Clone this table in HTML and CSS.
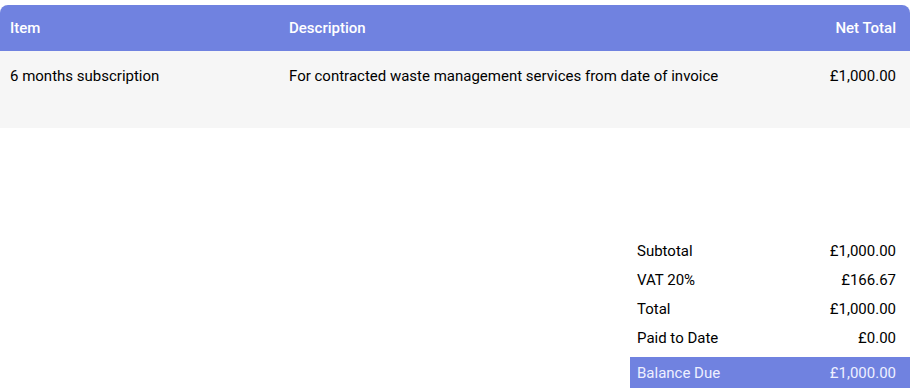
FILE: index.html
```html
<!DOCTYPE html>
<html lang="en">
<head>
    <meta charset="UTF-8">
    <meta name="viewport" content="width=device-width, initial-scale=1.0">
    <title>Invoice</title>
    <link rel="stylesheet" href="styles.css">
</head>
<body>
    <div class="invoice">
        <div class="items">
            <div class="items-head">
                <div class="col-item">Item</div>
                <div class="col-desc">Description</div>
                <div class="col-total">Net Total</div>
            </div>
            <div class="items-row">
                <div class="col-item">6 months subscription</div>
                <div class="col-desc">For contracted waste management services from date of invoice</div>
                <div class="col-total">£1,000.00</div>
            </div>
        </div>

        <div class="totals">
            <div class="totals-row">
                <span>Subtotal</span>
                <span>£1,000.00</span>
            </div>
            <div class="totals-row">
                <span>VAT 20%</span>
                <span>£166.67</span>
            </div>
            <div class="totals-row">
                <span>Total</span>
                <span>£1,000.00</span>
            </div>
            <div class="totals-row">
                <span>Paid to Date</span>
                <span>£0.00</span>
            </div>
            <div class="totals-row balance">
                <span>Balance Due</span>
                <span>£1,000.00</span>
            </div>
        </div>
    </div>
</body>
</html>
```

FILE: styles.css
```css
body {
    margin: 0;
    padding: 5px 0 0;
    background-color: #fff;
    font-family: Roboto, "Noto Sans", sans-serif;
    font-size: 15px;
    line-height: 17px;
    color: #000;
}
.invoice {
    width: 910px;
    display: flex;
    flex-direction: column;
}
.items-head,
.items-row {
    display: grid;
    grid-template-columns: 279px 1fr auto;
    padding: 0 14px 0 10px;
}
.items-head {
    height: 46px;
    align-items: center;
    background-color: #7082e0;
    color: #fff;
    font-weight: 500;
    border-radius: 8px 8px 0 0;
}
.items-row {
    height: 77px;
    box-sizing: border-box;
    padding-top: 17px;
    background-color: #f6f6f6;
}
.col-total {
    text-align: right;
}
.totals {
    align-self: flex-end;
    width: 280px;
    margin-top: 109px;
    display: flex;
    flex-direction: column;
}
.totals-row {
    display: flex;
    justify-content: space-between;
    padding: 6px 14px 6px 7px;
}
.balance {
    margin-top: 4px;
    padding-top: 8px;
    padding-bottom: 6px;
    background-color: #7082e0;
    color: #eef0ff;
}
```
